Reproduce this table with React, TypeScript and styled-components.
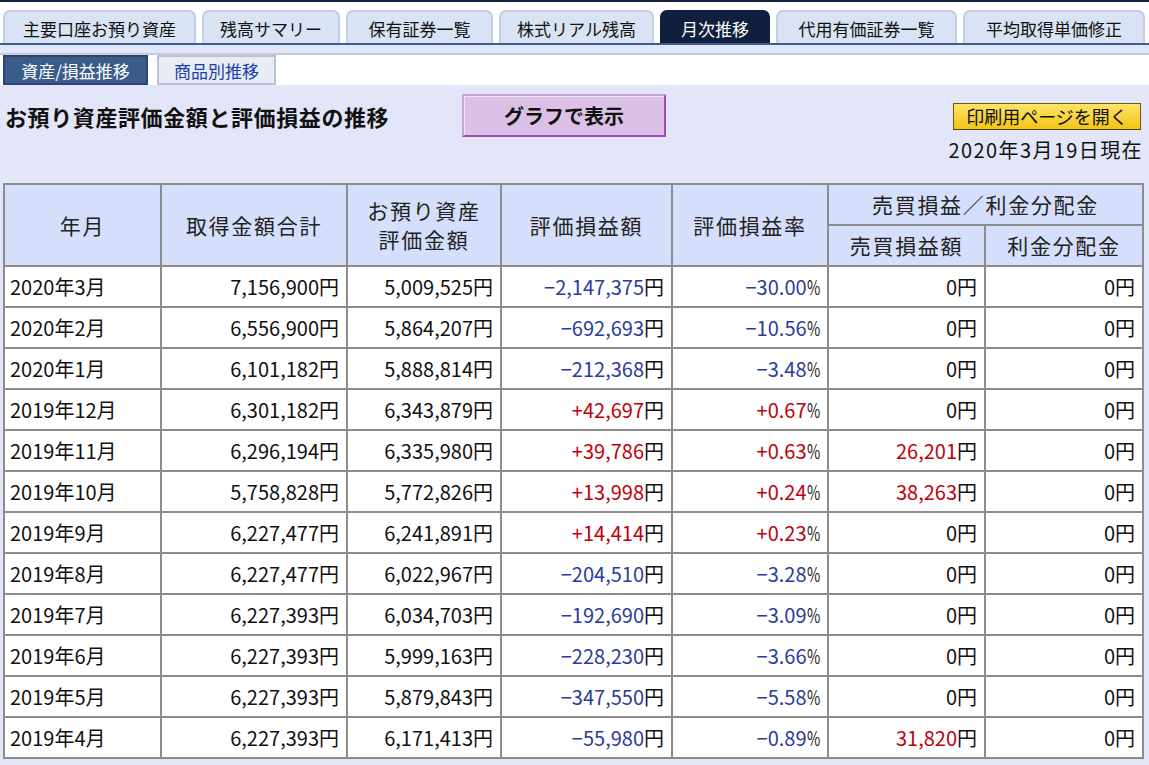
import styled, { createGlobalStyle } from 'styled-components';

const GlobalStyle = createGlobalStyle`
  html, body {
    margin: 0;
    padding: 0;
    background: #e3e5f8;
    font-family: "Noto Sans CJK JP", "Noto Sans", sans-serif;
    color: #111;
  }
`;

const Page = styled.div`
  width: 1149px;
  min-height: 765px;
  background: #e3e5f8;
`;

const TopBar = styled.div`
  background: #fff;
  border-top: 2px solid #16213d;
  padding: 8px 0 0 3px;
  border-bottom: 2px solid #3a5f94;
`;

const TabList = styled.div`
  display: flex;
  gap: 6px;
`;

const Tab = styled.div<{ $w: number; $active?: boolean }>`
  box-sizing: border-box;
  width: ${(p) => p.$w}px;
  height: 33px;
  display: flex;
  align-items: center;
  justify-content: center;
  border: 2px solid ${(p) => (p.$active ? '#0f1f3d' : '#c3cde3')};
  border-bottom: none;
  border-radius: 7px 7px 0 0;
  background: ${(p) => (p.$active ? '#0f1f3d' : '#dae3f3')};
  color: ${(p) => (p.$active ? '#fff' : '#111')};
  font-size: 17px;
  padding-top: 1px;
  white-space: nowrap;
`;

const SubNav = styled.div`
  margin-top: 8px;
  background: #fff;
  border-top: 2px solid #c8ccd8;
  display: flex;
  gap: 9px;
  padding-left: 3px;
`;

const SubTab = styled.div<{ $w: number; $active?: boolean }>`
  box-sizing: border-box;
  width: ${(p) => p.$w}px;
  height: 30px;
  display: flex;
  align-items: center;
  justify-content: center;
  border: 2px solid ${(p) => (p.$active ? '#2c4670' : '#b9c1d2')};
  background: ${(p) => (p.$active ? '#3b5b8b' : '#e8ecf5')};
  color: ${(p) => (p.$active ? '#fff' : '#1a3fa8')};
  font-size: 17px;
`;

const Content = styled.div`
  padding: 9px 8px 0 4px;
`;

const TitleRow = styled.div`
  display: grid;
  grid-template-columns: 458px auto 1fr auto;
  align-items: center;
  height: 43px;
`;

const Heading = styled.h1`
  margin: 0 0 0 1px;
  font-size: 22px;
  letter-spacing: 0.6px;
  font-weight: 700;
  color: #111;
  white-space: nowrap;
`;

const GraphButton = styled.button`
  box-sizing: border-box;
  width: 204px;
  height: 43px;
  border: 2px solid;
  border-color: #c9a6da #9a50b8 #9a50b8 #c9a6da;
  box-shadow: inset 1px 1px 0 #f1e6f7;
  background: #dbc1e6;
  font-family: inherit;
  font-size: 20px;
  font-weight: 700;
  color: #111;
  padding: 0;
  cursor: pointer;
`;

const PrintButton = styled.button`
  grid-column: 4;
  box-sizing: border-box;
  width: 188px;
  height: 27px;
  margin-top: 1px;
  border: 1px solid #6e5a00;
  border-bottom-color: #4a3c00;
  background: linear-gradient(#fde56a, #f2c416);
  font-family: inherit;
  font-size: 18px;
  line-height: 1;
  color: #111;
  padding: 0;
  cursor: pointer;
`;

const DateLine = styled.div`
  text-align: right;
  font-size: 20px;
  letter-spacing: 1.4px;
  line-height: 22px;
  margin-top: 2px;
  margin-right: -2px;
`;

const Table = styled.table`
  margin: 22px 0 0 -1px;
  width: 1139px;
  border-collapse: collapse;
  table-layout: fixed;
  background: #fff;
`;

const HeadRow = styled.tr`
  height: 41px;
`;

const HeadCell = styled.th`
  padding: 0;
  border: 2px solid #8c8c8c;
  background: #d5defa;
  font-weight: 400;
  font-size: 21px;
  letter-spacing: 1.7px;
  line-height: 29px;
  color: #222;
  text-align: center;
`;

const Row = styled.tr`
  height: 41px;
`;

const Cell = styled.td<{ $left?: boolean }>`
  padding: 0 ${(p) => (p.$left ? '0' : '7px')} 0 ${(p) => (p.$left ? '5px' : '0')};
  border: 2px solid #8c8c8c;
  font-size: 20px;
  line-height: 24px;
  text-align: ${(p) => (p.$left ? 'left' : 'right')};
  white-space: nowrap;
  color: #111;
`;

const Num = styled.span<{ $tone?: 'neg' | 'pos' }>`
  color: ${(p) => (p.$tone === 'neg' ? '#2a3d9c' : p.$tone === 'pos' ? '#c0000c' : '#111')};
`;

const Yen = styled.span`
  color: #111;
`;

const Pct = styled.span`
  display: inline-block;
  color: #222;
  transform: scaleX(0.72);
  transform-origin: left center;
  margin-right: -5px;
`;

type Tone = 'neg' | 'pos' | undefined;

const tabs = [
  { label: '主要口座お預り資産', w: 193 },
  { label: '残高サマリー', w: 138 },
  { label: '保有証券一覧', w: 147 },
  { label: '株式リアル残高', w: 155 },
  { label: '月次推移', w: 110, active: true },
  { label: '代用有価証券一覧', w: 181 },
  { label: '平均取得単価修正', w: 182 },
];

const rows: [string, string, string, string, string, string, string][] = [
  ['2020年3月', '7,156,900', '5,009,525', '−2,147,375', '−30.00', '0', '0'],
  ['2020年2月', '6,556,900', '5,864,207', '−692,693', '−10.56', '0', '0'],
  ['2020年1月', '6,101,182', '5,888,814', '−212,368', '−3.48', '0', '0'],
  ['2019年12月', '6,301,182', '6,343,879', '+42,697', '+0.67', '0', '0'],
  ['2019年11月', '6,296,194', '6,335,980', '+39,786', '+0.63', '26,201', '0'],
  ['2019年10月', '5,758,828', '5,772,826', '+13,998', '+0.24', '38,263', '0'],
  ['2019年9月', '6,227,477', '6,241,891', '+14,414', '+0.23', '0', '0'],
  ['2019年8月', '6,227,477', '6,022,967', '−204,510', '−3.28', '0', '0'],
  ['2019年7月', '6,227,393', '6,034,703', '−192,690', '−3.09', '0', '0'],
  ['2019年6月', '6,227,393', '5,999,163', '−228,230', '−3.66', '0', '0'],
  ['2019年5月', '6,227,393', '5,879,843', '−347,550', '−5.58', '0', '0'],
  ['2019年4月', '6,227,393', '6,171,413', '−55,980', '−0.89', '31,820', '0'],
];

const toneOf = (v: string): Tone => {
  if (v.startsWith('−')) return 'neg';
  if (v.startsWith('+')) return 'pos';
  if (v !== '0') return 'pos';
  return undefined;
};

const Yenned = ({ value, tone }: { value: string; tone?: Tone }) => (
  <>
    <Num $tone={tone}>{value}</Num>
    <Yen>円</Yen>
  </>
);

const colWidths = [157, 186, 154, 171, 156, 157, 158];

const App = () => {
  return (
    <Page>
      <GlobalStyle />
      <TopBar>
        <TabList>
          {tabs.map((t) => (
            <Tab key={t.label} $w={t.w} $active={t.active}>
              {t.label}
            </Tab>
          ))}
        </TabList>
      </TopBar>
      <SubNav>
        <SubTab $w={145} $active>
          資産/損益推移
        </SubTab>
        <SubTab $w={119}>商品別推移</SubTab>
      </SubNav>
      <Content>
        <TitleRow>
          <Heading>お預り資産評価金額と評価損益の推移</Heading>
          <GraphButton>グラフで表示</GraphButton>
          <PrintButton>印刷用ページを開く</PrintButton>
        </TitleRow>
        <DateLine>2020年3月19日現在</DateLine>
        <Table>
          <colgroup>
            {colWidths.map((w, i) => (
              <col key={i} style={{ width: w }} />
            ))}
          </colgroup>
          <thead>
            <HeadRow>
              <HeadCell rowSpan={2}>年月</HeadCell>
              <HeadCell rowSpan={2}>取得金額合計</HeadCell>
              <HeadCell rowSpan={2}>
                お預り資産
                <br />
                評価金額
              </HeadCell>
              <HeadCell rowSpan={2}>評価損益額</HeadCell>
              <HeadCell rowSpan={2}>評価損益率</HeadCell>
              <HeadCell colSpan={2}>売買損益／利金分配金</HeadCell>
            </HeadRow>
            <HeadRow>
              <HeadCell>売買損益額</HeadCell>
              <HeadCell>利金分配金</HeadCell>
            </HeadRow>
          </thead>
          <tbody>
            {rows.map(([month, cost, value, gain, rate, trade, interest]) => (
              <Row key={month}>
                <Cell $left>{month}</Cell>
                <Cell>
                  <Yenned value={cost} />
                </Cell>
                <Cell>
                  <Yenned value={value} />
                </Cell>
                <Cell>
                  <Yenned value={gain} tone={toneOf(gain)} />
                </Cell>
                <Cell>
                  <Num $tone={toneOf(rate)}>{rate}</Num>
                  <Pct>%</Pct>
                </Cell>
                <Cell>
                  <Yenned value={trade} tone={toneOf(trade)} />
                </Cell>
                <Cell>
                  <Yenned value={interest} tone={toneOf(interest)} />
                </Cell>
              </Row>
            ))}
          </tbody>
        </Table>
      </Content>
    </Page>
  );
};

export default App;
